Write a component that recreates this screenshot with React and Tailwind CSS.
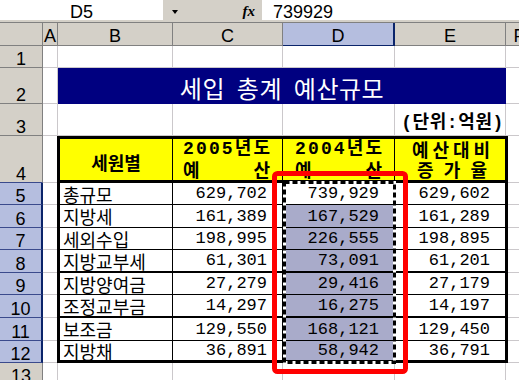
import React from "react";

const ROW_START = ["row-start-1","row-start-2","row-start-3","row-start-4","row-start-5","row-start-6","row-start-7","row-start-8","row-start-9","row-start-10","row-start-11","row-start-12","row-start-13"];
const COL_START = ["col-start-1","col-start-2","col-start-3","col-start-4","col-start-5","col-start-6","col-start-7"];

const COLS = "grid-cols-[43px_15px_115px_110px_112px_111px_27px]";
const ROWS = "grid-rows-[22px_36px_32px_47px_22px_23px_22px_23px_22px_23px_23px_22px_22px]";

const UI = "font-['Liberation_Sans',Arial,sans-serif]";
const KR = "font-['Noto_Sans_CJK_KR',sans-serif]";
const MONO = "font-['Liberation_Mono','Noto_Sans_CJK_KR',monospace]";

const DATA = [
  ["총규모", "629,702", "739,929", "629,602"],
  ["지방세", "161,389", "167,529", "161,289"],
  ["세외수입", "198,995", "226,555", "198,895"],
  ["지방교부세", "61,301", "73,091", "61,201"],
  ["지방양여금", "27,279", "29,416", "27,179"],
  ["조정교부금", "14,297", "16,275", "14,197"],
  ["보조금", "129,550", "168,121", "129,450"],
  ["지방채", "36,891", "58,942", "36,791"],
];

const ROW_CLS = [
  "h-[22px] border-b",
  "h-[23px] border-b",
  "h-[22px] border-b",
  "h-[23px] border-b-2",
  "h-[22px] border-b",
  "h-[23px] border-b-2",
  "h-[23px] border-b",
  "h-[19px]",
];

const LETTERS = ["", "A", "B", "C", "D", "E", "F"];

function Spread({ text, className }) {
  return (
    <div className={`flex justify-between ${className}`}>
      {[...text].map((ch, i) => (
        <span key={i}>{ch}</span>
      ))}
    </div>
  );
}

function Table() {
  return (
    <div className="row-start-4 row-span-9 col-start-3 col-span-4 -ml-px -mr-[2px] border-[3px] border-black bg-white flex flex-col text-black">
      <div className="flex h-[44px] border-b-[3px] border-black bg-[#ffff00] font-bold">
        <div className={`w-[113px] border-r border-black flex items-center justify-center pt-[6px] text-[18px] ${KR}`}>
          세원별
        </div>
        <div className={`w-[110px] border-r border-black overflow-hidden text-[18px] leading-[20px] ${MONO}`}>
          <Spread text="2005년도" className="pl-[10px] pr-[12px]" />
          <Spread text="예산" className="pl-[10px] pr-[12px] pt-[3px]" />
        </div>
        <div className={`w-[112px] border-r border-black overflow-hidden text-[18px] leading-[20px] ${MONO}`}>
          <Spread text="2004년도" className="pl-[12px] pr-[12px]" />
          <Spread text="예산" className="pl-[12px] pr-[12px] pt-[3px]" />
        </div>
        <div className={`w-[110px] overflow-hidden text-[18px] leading-[20px] ${KR}`}>
          <Spread text="예산대비" className="pl-[17px] pr-[15px]" />
          <Spread text="증가율" className="pl-[22px] pr-[18px]" />
        </div>
      </div>
      {DATA.map((row, i) => (
        <div key={i} className={`flex border-black ${ROW_CLS[i]}`}>
          <div className={`w-[113px] border-r border-black flex items-center pl-[3px] text-[18px] leading-[18px] ${KR}`}>
            {row[0]}
          </div>
          <div className={`w-[110px] border-r border-black flex items-center justify-end pr-[15px] text-[17px] leading-[17px] ${MONO}`}>
            {row[1]}
          </div>
          <div className={`w-[112px] border-r border-black flex items-center justify-end pr-[15px] text-[17px] leading-[17px] ${MONO} ${i > 0 ? "bg-[#a9abca]" : "bg-white"}`}>
            {row[2]}
          </div>
          <div className={`w-[110px] flex items-center justify-end pr-[15px] text-[17px] leading-[17px] ${MONO}`}>
            {row[3]}
          </div>
        </div>
      ))}
    </div>
  );
}

export default function App() {
  return (
    <div className="relative w-[519px] h-[380px] overflow-hidden bg-white">
      {/* name box / formula bar */}
      <div className="flex h-[22px] bg-[#d4d0c8]">
        <div className={`w-[163px] h-[20px] bg-white flex items-end justify-center leading-[16px] text-[18px] text-black ${UI}`}>
          D5
        </div>
        <div className="w-[99px] h-[20px] flex items-start">
          <div className="mt-[10px] ml-[9px] w-0 h-0 border-x-[3.5px] border-x-transparent border-t-[4px] border-t-black" />
          <div className="ml-auto mr-[7px] mt-[3px] font-['Liberation_Serif',serif] italic font-bold text-[15px] leading-[16px] text-black">
            fx
          </div>
        </div>
        <div className={`flex-1 h-[20px] bg-white flex items-end pl-[11px] leading-[16px] text-[18px] text-black ${UI}`}>
          739929
        </div>
      </div>

      {/* column headers */}
      <div className={`grid ${COLS} h-[24px] border-t border-[#808080] bg-[#d4d0c8] text-[18px] leading-[16px] text-black ${UI}`}>
        {LETTERS.map((l, c) => (
          <div
            key={c}
            className={
              c === 4
                ? "flex items-end justify-center pb-[1px] bg-[#b5bedf] border-r-2 border-b border-[#0a246a]"
                : "flex items-end justify-center pb-[1px] border-r border-b border-[#808080]"
            }
          >
            {l}
          </div>
        ))}
      </div>

      {/* sheet body */}
      <div className={`grid ${COLS} ${ROWS}`}>
        {Array.from({ length: 13 }).map((_, r) =>
          LETTERS.map((_, c) => {
            const pos = `${ROW_START[r]} ${COL_START[c]}`;
            if (c === 0) {
              const sel = r >= 4 && r <= 11;
              return (
                <div
                  key={`${r}-${c}`}
                  className={`${pos} flex items-end justify-center text-[18px] leading-[16px] text-black ${UI} ${
                    sel
                      ? "bg-[#b5bedf] border-r-2 border-b border-r-[#0a246a] border-b-[#3a4a8c]"
                      : r === 3
                      ? "bg-[#d4d0c8] border-r border-b border-r-[#808080] border-b-[#3a4a8c]"
                      : "bg-[#d4d0c8] border-r border-b border-[#808080]"
                  }`}
                >
                  {r + 1}
                </div>
              );
            }
            return <div key={`${r}-${c}`} className={`${pos} border-r border-b border-[#cbc8cb]`} />;
          })
        )}

        {/* title */}
        <div className={`row-start-2 col-start-3 col-span-4 bg-[#000080] text-white flex items-center justify-center pt-[4px] text-[24px] leading-[26px] tracking-[0.5px] [word-spacing:6px] ${KR}`}>
          세입 총계 예산규모
        </div>

        {/* unit */}
        <div className={`row-start-3 col-start-6 flex items-center justify-end pr-[2px] pt-[5px] font-bold text-[18px] leading-[20px] tracking-[0.6px] text-black whitespace-nowrap ${MONO}`}>
          (단위:억원)
        </div>

        <Table />
      </div>

      {/* selection marquee and red highlight */}
      <svg className="absolute left-0 top-0 pointer-events-none" width="519" height="380">
        <rect x="284.5" y="182.5" width="110" height="180" fill="none" stroke="#ffffff" strokeWidth="3" />
        <rect x="284.5" y="182.5" width="110" height="180" fill="none" stroke="#000000" strokeWidth="3" strokeDasharray="5 3" />
        <rect x="274.5" y="173.5" width="131" height="198" rx="3" fill="none" stroke="#ff0000" strokeWidth="5" />
      </svg>
    </div>
  );
}
